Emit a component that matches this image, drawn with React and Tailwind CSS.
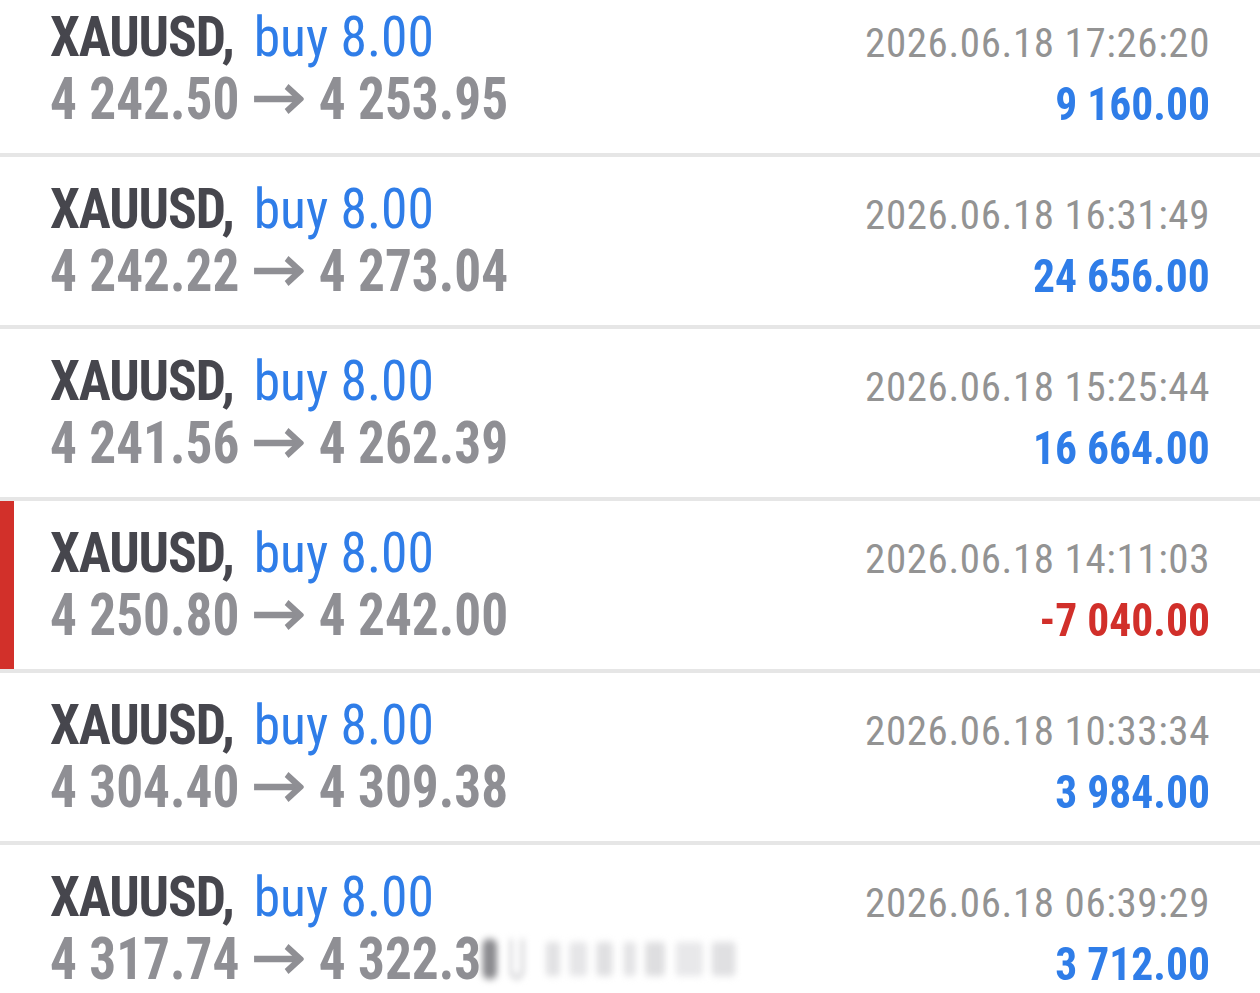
const trades = [
  { open: '4 242.50', close: '4 253.95', time: '2026.06.18 17:26:20', profit: '9 160.00' },
  { open: '4 242.22', close: '4 273.04', time: '2026.06.18 16:31:49', profit: '24 656.00' },
  { open: '4 241.56', close: '4 262.39', time: '2026.06.18 15:25:44', profit: '16 664.00' },
  { open: '4 250.80', close: '4 242.00', time: '2026.06.18 14:11:03', profit: '-7 040.00', loss: true },
  { open: '4 304.40', close: '4 309.38', time: '2026.06.18 10:33:34', profit: '3 984.00' },
  { open: '4 317.74', close: '4 322.3', time: '2026.06.18 06:39:29', profit: '3 712.00', hidden: true },
];

function Arrow() {
  return (
    <svg width="57" height="30" viewBox="0 0 57 30" className="ml-[14px] mr-[17px] shrink-0" fill="none">
      <path d="M2 15 H52" stroke="#8f8f94" strokeWidth="6.5" />
      <path d="M38 2.5 L53 15 L38 27.5" stroke="#8f8f94" strokeWidth="6.5" strokeLinejoin="miter" />
    </svg>
  );
}

// redacted tail of the last row is blurred in the source
function Smudge() {
  return (
    <span className="ml-[2px] flex items-center blur-[3.5px]">
      <span className="h-[40px] w-[16px] rounded-md bg-[#8c8c90]" />
      <span className="ml-[14px] h-[40px] w-[16px] rounded-b-lg border-[3px] border-t-0 border-[#c4c4c8]" />
      <span className="ml-[24px] h-[34px] w-[16px] rounded bg-[#e2e2e4]" />
      <span className="ml-[10px] h-[34px] w-[20px] rounded bg-[#e6e6e8]" />
      <span className="ml-[10px] h-[34px] w-[18px] rounded bg-[#e0e0e2]" />
      <span className="ml-[12px] h-[34px] w-[14px] rounded bg-[#e4e4e6]" />
      <span className="ml-[10px] h-[34px] w-[22px] rounded bg-[#dedee0]" />
      <span className="ml-[12px] h-[34px] w-[30px] rounded bg-[#e8e8ea]" />
      <span className="ml-[10px] h-[34px] w-[26px] rounded bg-[#e0e0e2]" />
    </span>
  );
}

function TradeRow({ trade }) {
  return (
    <div className="flex h-[172px] border-b-4 border-[#e6e6e6]">
      <div className={trade.loss ? 'w-[14px] shrink-0 bg-[#d2302a]' : 'w-[14px] shrink-0'} />
      <div className="flex min-w-0 flex-1 justify-between pl-[36px] pr-[50px]">
        <div className="min-w-0 pt-[24px]">
          <div className="origin-left scale-x-[0.956] whitespace-nowrap text-[56px] leading-[56px]">
            <span className="font-bold tracking-[-1.2px] text-[#46464d]">XAUUSD,</span>
            <span className="ml-[21px] text-[#2f7de8]">buy 8.00</span>
          </div>
          <div className="mt-[4px] flex origin-left scale-x-[0.903] items-center whitespace-nowrap text-[59px] font-bold leading-[59px] text-[#8f8f94]">
            <span>{trade.open}</span>
            <Arrow />
            <span>{trade.close}</span>
            {trade.hidden && <Smudge />}
          </div>
        </div>
        <div className="flex shrink-0 flex-col items-end pt-[38px]">
          <div className="whitespace-nowrap text-[41px] leading-[41px] tracking-[0.6px] text-[#939393]">{trade.time}</div>
          <div
            className={
              'mt-[16px] origin-right scale-x-[0.927] whitespace-nowrap text-[47px] font-bold leading-[47px] ' +
              (trade.loss ? 'text-[#d12f2a]' : 'text-[#2f7de8]')
            }
          >
            {trade.profit}
          </div>
        </div>
      </div>
    </div>
  );
}

export default function App() {
  return (
    <div
      className="h-[993px] w-[1260px] overflow-hidden bg-white"
      style={{ fontFamily: '"Roboto Condensed", Roboto, "Liberation Sans", sans-serif' }}
    >
      <div className="-mt-[15px]">
        {trades.map((t) => (
          <TradeRow key={t.time} trade={t} />
        ))}
      </div>
    </div>
  );
}
